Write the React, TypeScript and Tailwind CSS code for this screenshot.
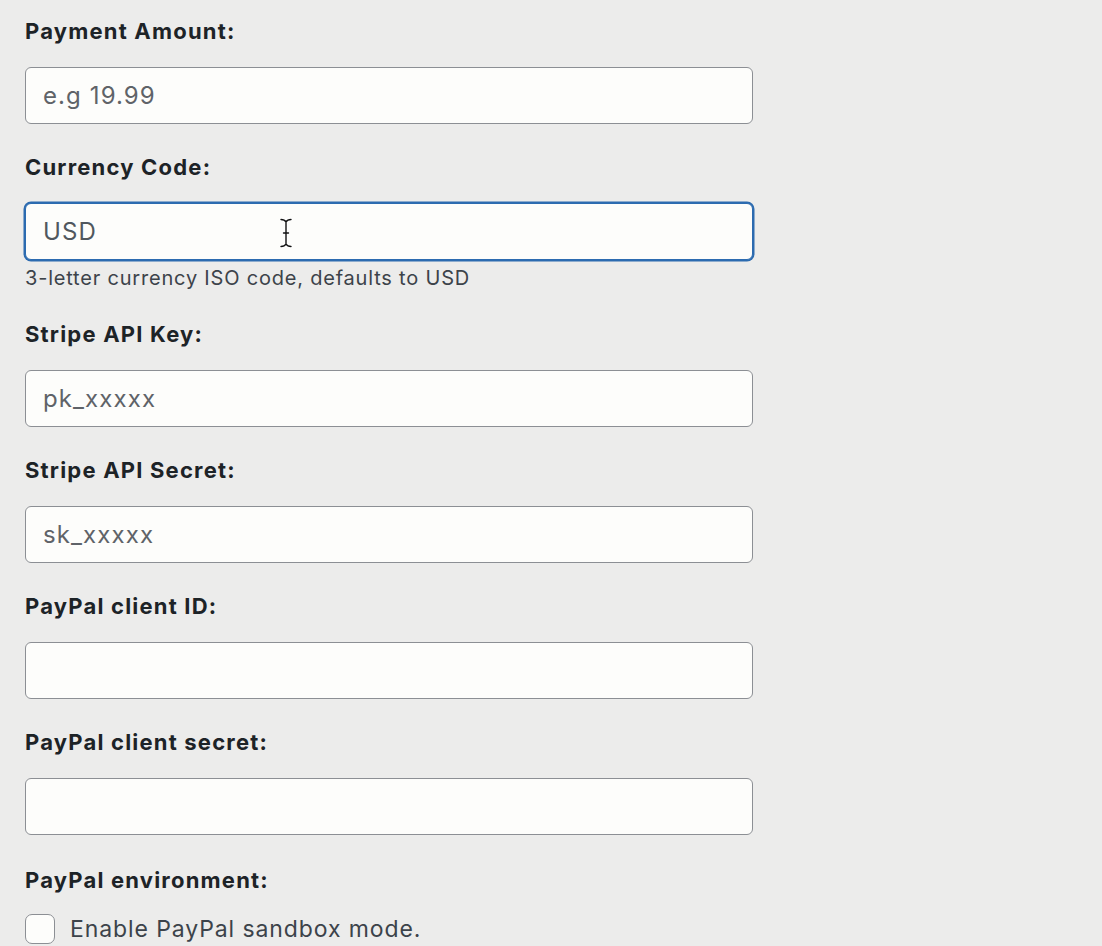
const font = { fontFamily: "Inter, 'Liberation Sans', sans-serif" };

type FieldProps = {
  label: string;
  placeholder?: string;
  value?: string;
  focused?: boolean;
  help?: string;
};

function IBeam() {
  return (
    <svg
      className="pointer-events-none absolute left-[254px] top-[14px]"
      width="14"
      height="32"
      viewBox="0 0 14 32"
      fill="none"
    >
      <path
        d="M2 2.5c2.5 0 4 .8 5 2.5 1-1.7 2.5-2.5 5-2.5M7 5v22M2 29.5c2.5 0 4-.8 5-2.5 1 1.7 2.5 2.5 5 2.5M4.5 16h5"
        stroke="#fff"
        strokeWidth="3"
        strokeLinecap="round"
      />
      <path
        d="M2 2.5c2.5 0 4 .8 5 2.5 1-1.7 2.5-2.5 5-2.5M7 5v22M2 29.5c2.5 0 4-.8 5-2.5 1 1.7 2.5 2.5 5 2.5M4.5 16h5"
        stroke="#111"
        strokeWidth="1.4"
        strokeLinecap="round"
      />
    </svg>
  );
}

function Field({ label, placeholder, value, focused, help }: FieldProps) {
  return (
    <div>
      <label className="block text-[22px] font-bold leading-[28px] tracking-[1.2px] text-[#1d2327]">
        {label}
      </label>
      <div className="relative mt-[22px] w-[728px]">
        <input
          type="text"
          defaultValue={value}
          placeholder={placeholder}
          style={font}
          className={
            focused
              ? "h-[57px] w-full rounded-[6px] border border-[#2c6bb0] bg-[#fdfdfb] pl-[17px] text-[24px] tracking-[1.1px] text-[#50575e] shadow-[0_0_0_1.5px_#2c6bb0] outline-none placeholder:text-[#5f6368]"
              : "h-[57px] w-full rounded-[6px] border border-[#8c8f94] bg-[#fdfdfb] pl-[17px] text-[24px] tracking-[1.1px] text-[#50575e] outline-none placeholder:text-[#5f6368]"
          }
        />
        {focused && <IBeam />}
      </div>
      {help && (
        <p className="mt-[5px] text-[20px] leading-[26px] tracking-[0.8px] text-[#3c434a]">{help}</p>
      )}
    </div>
  );
}

export default function App() {
  return (
    <div style={font} className="min-h-[946px] bg-[#ececeb] pl-[25px] pt-[17px]">
      <div className="flex flex-col gap-[29px]">
        <Field label="Payment Amount:" placeholder="e.g 19.99" />
        <Field label="Currency Code:" value="USD" focused help="3-letter currency ISO code, defaults to USD" />
        <Field label="Stripe API Key:" placeholder="pk_xxxxx" />
        <Field label="Stripe API Secret:" placeholder="sk_xxxxx" />
        <Field label="PayPal client ID:" />
        <Field label="PayPal client secret:" />
        <div className="pt-[2px]">
          <div className="text-[22px] font-bold leading-[28px] tracking-[1.2px] text-[#1d2327]">
            PayPal environment:
          </div>
          <label className="mt-[20px] flex items-center gap-[15px]">
            <span className="h-[30px] w-[30px] shrink-0 rounded-[7px] border border-[#8c8f94] bg-[#fdfdfb]" />
            <span className="text-[23px] leading-[30px] tracking-[0.9px] text-[#3c434a]">
              Enable PayPal sandbox mode.
            </span>
          </label>
        </div>
      </div>
    </div>
  );
}
